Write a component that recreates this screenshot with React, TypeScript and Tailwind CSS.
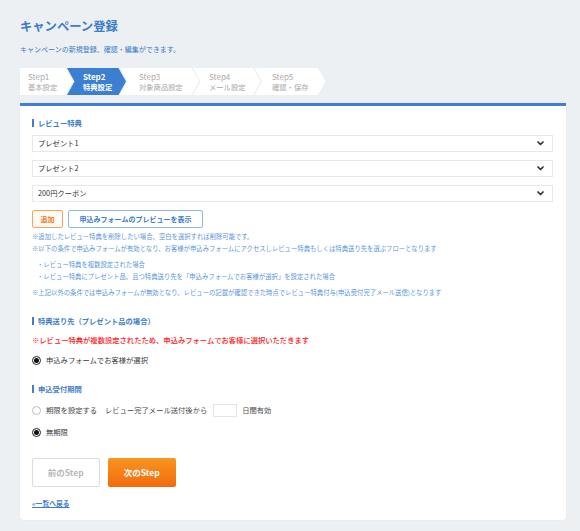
import React from "react";

const font = { fontFamily: '"Noto Sans CJK JP", "Noto Sans", sans-serif' };

const steps = [
  { n: "Step1", l: "基本設定", cls: "w-[53px] pl-[8px] [clip-path:polygon(0_0,calc(100%_-_7.5px)_0,100%_50%,calc(100%_-_7.5px)_100%,0_100%)]", active: false },
  { n: "Step2", l: "特典設定", cls: "w-[59px] ml-[-6px] pl-[16px] [clip-path:polygon(0_0,calc(100%_-_7.5px)_0,100%_50%,calc(100%_-_7.5px)_100%,0_100%,7.5px_50%)]", active: true },
  { n: "Step3", l: "対象商品設定", cls: "w-[79px] ml-[-6px] pl-[19px] [clip-path:polygon(0_0,calc(100%_-_7.5px)_0,100%_50%,calc(100%_-_7.5px)_100%,0_100%,7.5px_50%)]", active: false },
  { n: "Step4", l: "メール設定", cls: "w-[67.5px] ml-[-6px] pl-[16px] [clip-path:polygon(0_0,calc(100%_-_7.5px)_0,100%_50%,calc(100%_-_7.5px)_100%,0_100%,7.5px_50%)]", active: false },
  { n: "Step5", l: "確認・保存", cls: "w-[71px] ml-[-6px] pl-[17.5px] [clip-path:polygon(0_0,calc(100%_-_7.5px)_0,100%_50%,calc(100%_-_7.5px)_100%,0_100%,7.5px_50%)]", active: false },
];

function Chevron() {
  return (
    <svg width="7" height="5" viewBox="0 0 7 5" className="shrink-0">
      <path d="M1 1 L3.5 3.5 L6 1" fill="none" stroke="#333" strokeWidth="1.7" strokeLinecap="round" strokeLinejoin="round" />
    </svg>
  );
}

function Select({ label }: { label: string }) {
  return (
    <div className="h-[17px] flex items-center justify-between border border-[#e6e8ea] bg-white pl-[5px] pr-[8px] text-[7.3px] text-[#333]">
      <span>{label}</span>
      <Chevron />
    </div>
  );
}

function Radio({ checked }: { checked: boolean }) {
  return checked ? (
    <span className="w-[9px] h-[9px] rounded-full border border-[#222] bg-white flex items-center justify-center shrink-0">
      <span className="w-[5px] h-[5px] rounded-full bg-[#111]" />
    </span>
  ) : (
    <span className="w-[9px] h-[9px] rounded-full border border-[#bdbdbd] bg-white shrink-0" />
  );
}

function SectionLabel({ children }: { children: React.ReactNode }) {
  return (
    <div className="h-[10px] flex items-center">
      <span className="w-[1.5px] h-[8px] bg-[#3c7fd1] mr-[4.5px]" />
      <span className="text-[7.3px] font-bold text-[#3c7cc9] leading-[10px]">{children}</span>
    </div>
  );
}

export default function App() {
  return (
    <div style={font} className="w-[580px] h-[531px] bg-[#edf0f2] px-[20px] overflow-hidden">
      <div className="pt-[18px] h-[34px] text-[12.3px] leading-[16px] font-bold text-[#3b7cc9]">キャンペーン登録</div>
      <div className="mt-[10px] h-[10px] text-[7px] leading-[10px] text-[#3b7cc9]">キャンペーンの新規登録、確認・編集ができます。</div>

      <div className="mt-[14px] h-[27px] flex">
        {steps.map((s) => (
          <div
            key={s.n}
            className={`h-[27px] shrink-0 flex flex-col justify-center ${s.cls} ${s.active ? "bg-[#3c7fd1] text-white font-bold" : "bg-white text-[#a9a9a9]"}`}
          >
            <div className="text-[8px] leading-[10px]">{s.n}</div>
            <div className="text-[7.3px] leading-[10px]">{s.l}</div>
          </div>
        ))}
      </div>

      <div className="mt-[8px] w-[546px] bg-white border-t-[3px] border-[#3f80d6] rounded-b-[3px] shadow-[0_0_1px_rgba(0,0,0,0.12)] pl-[12px] pr-[13px] pt-[12px] pb-[11.7px]">
        <SectionLabel>レビュー特典</SectionLabel>
        <div className="mt-[7px] flex flex-col gap-[8px]">
          <Select label="プレゼント1" />
          <Select label="プレゼント2" />
          <Select label="200円クーポン" />
        </div>

        <div className="mt-[8px] flex gap-[5px]">
          <button className="h-[18px] w-[31px] rounded-[2px] border border-[#f5a468] bg-[#fffaf6] text-[7px] font-bold text-[#f07a1f] flex items-center justify-center">追加</button>
          <button className="h-[18px] w-[135px] rounded-[2px] border border-[#92b7e6] bg-white text-[7px] font-bold text-[#3c7cc9] flex items-center justify-center">申込みフォームのプレビューを表示</button>
        </div>

        <div className="mt-[3.3px] text-[6.35px] leading-[12px] text-[#5b97da]">
          <div>※追加したレビュー特典を削除したい場合、空白を選択すれば削除可能です。</div>
          <div>※以下の条件で申込みフォームが有効となり、お客様が申込みフォームにアクセスしレビュー特典もしくは特典送り先を選ぶフローとなります</div>
          <div className="mt-[4px] pl-[5px]">・レビュー特典を複数設定された場合</div>
          <div className="pl-[5px]">・レビュー特典にプレゼント品、且つ特典送り先を「申込みフォームでお客様が選択」を設定された場合</div>
          <div className="mt-[3.4px]">※上記以外の条件では申込みフォームが無効となり、レビューの記載が確認できた時点でレビュー特典付与(申込受付完了メール送信)となります</div>
        </div>

        <div className="mt-[17px]">
          <SectionLabel>特典送り先（プレゼント品の場合）</SectionLabel>
        </div>
        <div className="mt-[9.3px] h-[10px] text-[7.3px] leading-[10px] font-medium text-[#ff2020]">※レビュー特典が複数設定されたため、申込みフォームでお客様に選択いただきます</div>
        <div className="mt-[10.7px] h-[10px] flex items-center gap-[5px] text-[7.3px] text-[#3a3a3a]">
          <Radio checked />
          <span>申込みフォームでお客様が選択</span>
        </div>

        <div className="mt-[18.3px]">
          <SectionLabel>申込受付期間</SectionLabel>
        </div>
        <div className="mt-[10.2px] h-[13px] flex items-center text-[7.3px] text-[#4a4a4a]">
          <Radio checked={false} />
          <span className="ml-[5px]">期限を設定する</span>
          <span className="ml-[8px]">レビュー完了メール送付後から</span>
          <span className="ml-[6px] w-[24px] h-[13px] border border-[#e2e4e6] bg-white" />
          <span className="ml-[5px]">日間有効</span>
        </div>
        <div className="mt-[10.5px] h-[10px] flex items-center gap-[5px] text-[7.3px] text-[#3a3a3a]">
          <Radio checked />
          <span>無期限</span>
        </div>

        <div className="mt-[20.6px] flex gap-[8.5px]">
          <button className="h-[28.4px] w-[67.5px] rounded-[2px] border border-[#dcdcdc] bg-white text-[8.5px] font-bold text-[#b8b8b8] flex items-center justify-center">前のStep</button>
          <button className="h-[28.4px] w-[67.5px] rounded-[2px] bg-gradient-to-b from-[#f7951f] to-[#f26a0c] text-[8.5px] font-bold text-white flex items-center justify-center">次のStep</button>
        </div>

        <div className="mt-[11.6px] h-[10px] text-[6.8px] leading-[10px]">
          <a className="font-bold text-[#3c7cc9] underline">«一覧へ戻る</a>
        </div>
      </div>
    </div>
  );
}
